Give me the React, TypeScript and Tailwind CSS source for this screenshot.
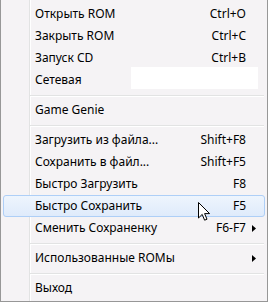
type Item =
  | { kind: 'item'; label: string; shortcut?: string; submenu?: boolean; hover?: boolean; input?: boolean }
  | { kind: 'sep' };

const items: Item[] = [
  { kind: 'item', label: 'Открыть ROM', shortcut: 'Ctrl+O' },
  { kind: 'item', label: 'Закрыть ROM', shortcut: 'Ctrl+C' },
  { kind: 'item', label: 'Запуск CD', shortcut: 'Ctrl+B' },
  { kind: 'item', label: 'Сетевая', input: true },
  { kind: 'sep' },
  { kind: 'item', label: 'Game Genie' },
  { kind: 'sep' },
  { kind: 'item', label: 'Загрузить из файла...', shortcut: 'Shift+F8' },
  { kind: 'item', label: 'Сохранить в файл...', shortcut: 'Shift+F5' },
  { kind: 'item', label: 'Быстро Загрузить', shortcut: 'F8' },
  { kind: 'item', label: 'Быстро Сохранить', shortcut: 'F5', hover: true },
  { kind: 'item', label: 'Сменить Сохраненку', shortcut: 'F6-F7', submenu: true },
  { kind: 'sep' },
  { kind: 'item', label: 'Использованные ROMы', submenu: true },
  { kind: 'sep' },
  { kind: 'item', label: 'Выход' },
];

function Arrow() {
  return (
    <svg width="4" height="7" viewBox="0 0 4 7">
      <path d="M0 0 L4 3.5 L0 7 Z" fill="#000" />
    </svg>
  );
}

function Cursor() {
  return (
    <svg width="13" height="20" viewBox="0 0 13 20" className="absolute left-[197px] top-[202px]">
      <path
        d="M0.5 0.5 L0.5 16 L4.2 12.4 L6.6 18.2 L9 17.2 L6.6 11.6 L11.6 11.6 Z"
        fill="#fff"
        stroke="#000"
        strokeWidth="1"
      />
    </svg>
  );
}

function Row({ item }: { item: Extract<Item, { kind: 'item' }> }) {
  const box = item.hover
    ? 'border-[#aecff7] bg-gradient-to-b from-[#eef5fd] to-[#dfebfb]'
    : 'border-transparent';
  return (
    <div className={`mx-[2px] h-[22px] rounded-[3px] border ${box} flex items-center pl-[31px] text-[12px] leading-[16px] text-black`}>
      {item.input ? (
        <>
          <span className="w-[96px] shrink-0">{item.label}</span>
          <div className="self-start -mt-[3px] w-[127px] h-[22px] bg-white" />
        </>
      ) : (
        <>
          <span className="flex-1">{item.label}</span>
          {item.shortcut && <span>{item.shortcut}</span>}
          <div className="w-[18px] pl-[6px] flex items-center">{item.submenu && <Arrow />}</div>
        </>
      )}
    </div>
  );
}

export default function App() {
  return (
    <div
      className="relative w-[268px] h-[302px] bg-[#f5f3f5] border-l border-r border-b border-[#979797] pt-[3px] overflow-hidden"
      style={{ fontFamily: '"Segoe UI", "Noto Sans", sans-serif' }}
    >
      <div className="absolute left-[28px] top-0 bottom-0 w-px bg-[#e2e3e3]" />
      <div className="absolute left-[29px] top-0 bottom-0 w-px bg-white" />
      <div className="relative flex flex-col">
        {items.map((it, i) =>
          it.kind === 'sep' ? (
            <div key={i} className="h-[8px] pl-[29px] pr-[3px] pt-[4px]">
              <div className="h-px bg-[#e2e3e3]" />
              <div className="h-px bg-white" />
            </div>
          ) : (
            <Row key={i} item={it} />
          )
        )}
      </div>
      <Cursor />
    </div>
  );
}
